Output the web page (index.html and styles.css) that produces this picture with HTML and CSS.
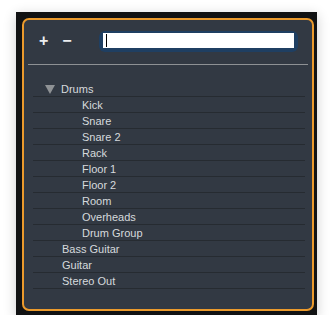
FILE: index.html
```html
<!DOCTYPE html>
<html lang="en">
<head>
    <meta charset="UTF-8">
    <title>Tracks</title>
    <link rel="stylesheet" href="styles.css">
</head>
<body>
    <div class="frame">
        <div class="panel">
            <div class="toolbar">
                <span class="btn plus">+</span>
                <span class="btn minus">&minus;</span>
                <div class="search">
                    <div class="field"><span class="caret"></span></div>
                </div>
            </div>
            <div class="sep"></div>
            <ul class="tree">
                <li class="row"><span class="arrow"></span>Drums</li>
                <li class="row child">Kick</li>
                <li class="row child">Snare</li>
                <li class="row child">Snare 2</li>
                <li class="row child">Rack</li>
                <li class="row child">Floor 1</li>
                <li class="row child">Floor 2</li>
                <li class="row child">Room</li>
                <li class="row child">Overheads</li>
                <li class="row child">Drum Group</li>
                <li class="row top">Bass Guitar</li>
                <li class="row top">Guitar</li>
                <li class="row top">Stereo Out</li>
            </ul>
        </div>
    </div>
</body>
</html>
```

FILE: styles.css
```css
* {
    margin: 0;
    padding: 0;
    box-sizing: border-box;
}

body {
    background-color: #fff;
    font-family: "Liberation Sans", Arial, sans-serif;
}

li {
    list-style: none;
}

.frame {
    margin: 12px 0 0 16px;
    width: 301px;
    height: 303px;
    padding: 6px 3px 4px 6px;
    background-color: #111213;
    box-shadow: 0 3px 12px rgba(0, 0, 0, .2);
}

.panel {
    height: 100%;
    border: 2px solid #eb9a2c;
    border-radius: 7px;
    background-color: #323943;
}

.toolbar {
    display: flex;
    align-items: center;
    height: 44px;
    padding: 0 0 2px 15px;
}

.btn {
    color: #eceef0;
    font-size: 16px;
    font-weight: bold;
    line-height: 16px;
}

.minus {
    margin-left: 14px;
}

.search {
    margin-left: 27px;
    width: 199px;
    height: 21px;
    padding: 2px 4px 4px 4px;
    border-radius: 6px;
    background-color: #1f3f62;
}

.field {
    height: 15px;
    padding: 1px 3px;
    background-color: #fff;
}

.caret {
    display: block;
    width: 1px;
    height: 13px;
    background-color: #000;
}

.sep {
    height: 1px;
    margin: 0 4px;
    background-color: #8e9194;
}

.tree {
    margin: 16px 7px 0 9px;
}

.row {
    display: flex;
    align-items: center;
    height: 16px;
    padding: 1px 0 0 29px;
    border-bottom: 1px solid #262b31;
    color: #d6d9dd;
    font-size: 11px;
}

.row:first-child {
    padding-left: 12px;
}

.child {
    padding-left: 49px;
}

.arrow {
    width: 0;
    height: 0;
    margin-right: 6px;
    border-left: 5px solid transparent;
    border-right: 5px solid transparent;
    border-top: 9px solid #8f9295;
}
```
